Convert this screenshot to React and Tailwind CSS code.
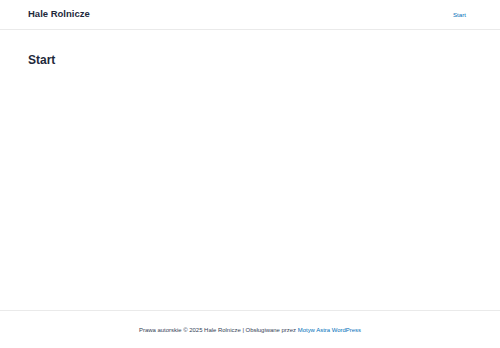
export default function App() {
  return (
    <div className="flex min-h-[348px] flex-col bg-white" style={{ fontFamily: '"Liberation Sans", Arial, sans-serif' }}>
      <header className="flex h-[30px] items-center justify-between border-b border-[#eaeaea] pl-[28px] pr-[34px]">
        <span className="text-[9.5px] font-bold text-[#1e293b]">Hale Rolnicze</span>
        <a className="text-[6.2px] text-[#0170b9]">Start</a>
      </header>
      <main className="flex-1 px-[28px] pt-[22px]">
        <h1 className="text-[12px] font-bold leading-[16px] text-[#1e293b]">Start</h1>
      </main>
      <footer className="flex h-[38px] items-center justify-center border-t border-[#eaeaea] pt-[1px] text-[5.95px] text-[#334155]">
        <span>
          Prawa autorskie © 2025 Hale Rolnicze | Obsługiwane przez <a className="text-[#0170b9]">Motyw Astra WordPress</a>
        </span>
      </footer>
    </div>
  );
}
